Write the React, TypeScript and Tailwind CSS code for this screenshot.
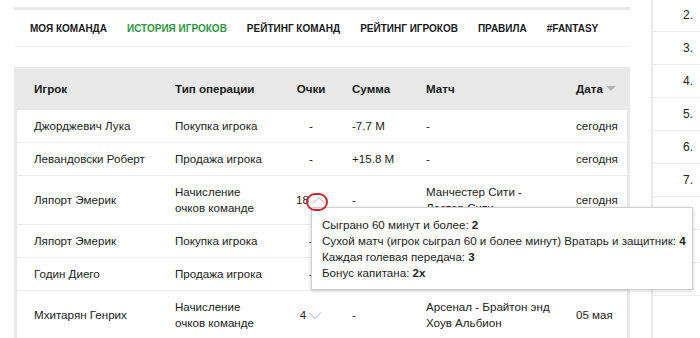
import { ReactNode } from 'react';

const navItems = ['Моя команда', 'История игроков', 'Рейтинг команд', 'Рейтинг игроков', 'Правила', '#Fantasy'];

const Chevron = ({ up }: { up?: boolean }) => (
  <svg width="14" height="8" viewBox="0 0 14 8" className="shrink-0">
    <polyline
      points={up ? '1,7.5 7,1.5 13,7.5' : '1,1.5 7,7.5 13,1.5'}
      fill="none"
      stroke="#a8a8a8"
      strokeWidth="1"
    />
  </svg>
);

type Row = {
  player: string;
  op: ReactNode;
  points: ReactNode;
  sum: string;
  match: ReactNode;
  date: string;
};

const rows: Row[] = [
  { player: 'Джорджевич Лука', op: 'Покупка игрока', points: '-', sum: '-7.7 M', match: '-', date: 'сегодня' },
  { player: 'Левандовски Роберт', op: 'Продажа игрока', points: '-', sum: '+15.8 M', match: '-', date: 'сегодня' },
  {
    player: 'Ляпорт Эмерик',
    op: 'Начисление очков команде',
    points: (
      <span className="flex items-center gap-[3px]">
        18 <Chevron up />
      </span>
    ),
    sum: '-',
    match: 'Манчестер Сити - Лестер Сити',
    date: 'сегодня',
  },
  { player: 'Ляпорт Эмерик', op: 'Покупка игрока', points: '-', sum: '-', match: '-', date: 'сегодня' },
  { player: 'Годин Диего', op: 'Продажа игрока', points: '-', sum: '-', match: '-', date: 'сегодня' },
  {
    player: 'Мхитарян Генрих',
    op: 'Начисление очков команде',
    points: (
      <span className="flex items-center gap-[2px]">
        4 <Chevron />
      </span>
    ),
    sum: '-',
    match: 'Арсенал - Брайтон энд Хоув Альбион',
    date: '05 мая',
  },
];

// ranks visible in the sidebar; the last rows sit under the tooltip
const ranks = ['2.', '3.', '4.', '5.', '6.', '7.', '8.', '9.', ''];

const cols = 'grid grid-cols-[158px_113px_46px_92px_150px_1fr]';

const App = () => {
  return (
    <div className="flex w-[700px] h-[338px] overflow-hidden bg-white text-[#222] font-['Liberation_Sans',Arial,sans-serif]">
      {/* Main column */}
      <div className="w-[630px] shrink-0 pl-[14px]">
        <nav className="mt-[7px] h-[40px] border-t-[3px] border-b border-t-[#e8e8e8] border-b-[#efefef] flex items-center gap-[20px] pl-[16px] pt-px">
          {navItems.map((item, i) => (
            <span
              key={item}
              className={`text-[10px] font-bold uppercase whitespace-nowrap ${i === 1 ? 'text-[#2c9a3e]' : 'text-[#1a1a1a]'}`}
            >
              {item}
            </span>
          ))}
        </nav>

        {/* Transfers table */}
        <div className="relative mt-[20px] border-x-[3px] border-[#e8e8e8] text-[11.6px] leading-[16px]">
          <div className={`${cols} h-[43px] items-center bg-[#e8e8e8] font-bold text-[#1a1a1a]`}>
            <div className="pl-[17px]">Игрок</div>
            <div>Тип операции</div>
            <div className="text-center">Очки</div>
            <div className="pl-[18px]">Сумма</div>
            <div>Матч</div>
            <div className="flex items-center gap-[3px]">
              Дата
              <svg width="10" height="6" viewBox="0 0 10 6">
                <polygon points="0,0 10,0 5,5" fill="#b3b3b3" />
              </svg>
            </div>
          </div>
          {rows.map((r, i) => (
            <div key={i} className={`${cols} items-center py-[8px] border-b border-[#ececec]`}>
              <div className="pl-[17px]">{r.player}</div>
              <div className="pr-[20px]">{r.op}</div>
              <div className="flex justify-center">{r.points}</div>
              <div className="pl-[18px]">{r.sum}</div>
              <div className="pr-[20px]">{r.match}</div>
              <div>{r.date}</div>
            </div>
          ))}

          {/* Highlight around the expanded points */}
          <div className="absolute left-[289px] top-[126px] w-[22px] h-[18px] rounded-full border-2 border-[#d9232b] z-20" />

          {/* Points breakdown tooltip */}
          <div className="absolute left-[294px] top-[140px] w-[382px] z-10 bg-white border border-[#cfcfcf] shadow-[0_1px_4px_rgba(0,0,0,0.18)] pl-[10px] pt-[9px] pb-[8px] whitespace-nowrap">
            <div>
              Сыграно 60 минут и более: <b>2</b>
            </div>
            <div>
              Сухой матч (игрок сыграл 60 и более минут) Вратарь и защитник: <b>4</b>
            </div>
            <div>
              Каждая голевая передача: <b>3</b>
            </div>
            <div>
              Бонус капитана: <b>2x</b>
            </div>
          </div>
        </div>
      </div>

      {/* Ranking sidebar */}
      <div className="ml-[21px] flex-1 border-l-2 border-[#eaeaea] text-[12px]">
        <div className="-mt-px">
          {ranks.map((n, i) => (
            <div key={i} className="h-[33px] flex items-center pl-[30px] border-b border-[#ececec]">
              {n}
            </div>
          ))}
        </div>
      </div>
    </div>
  );
};

export default App;
